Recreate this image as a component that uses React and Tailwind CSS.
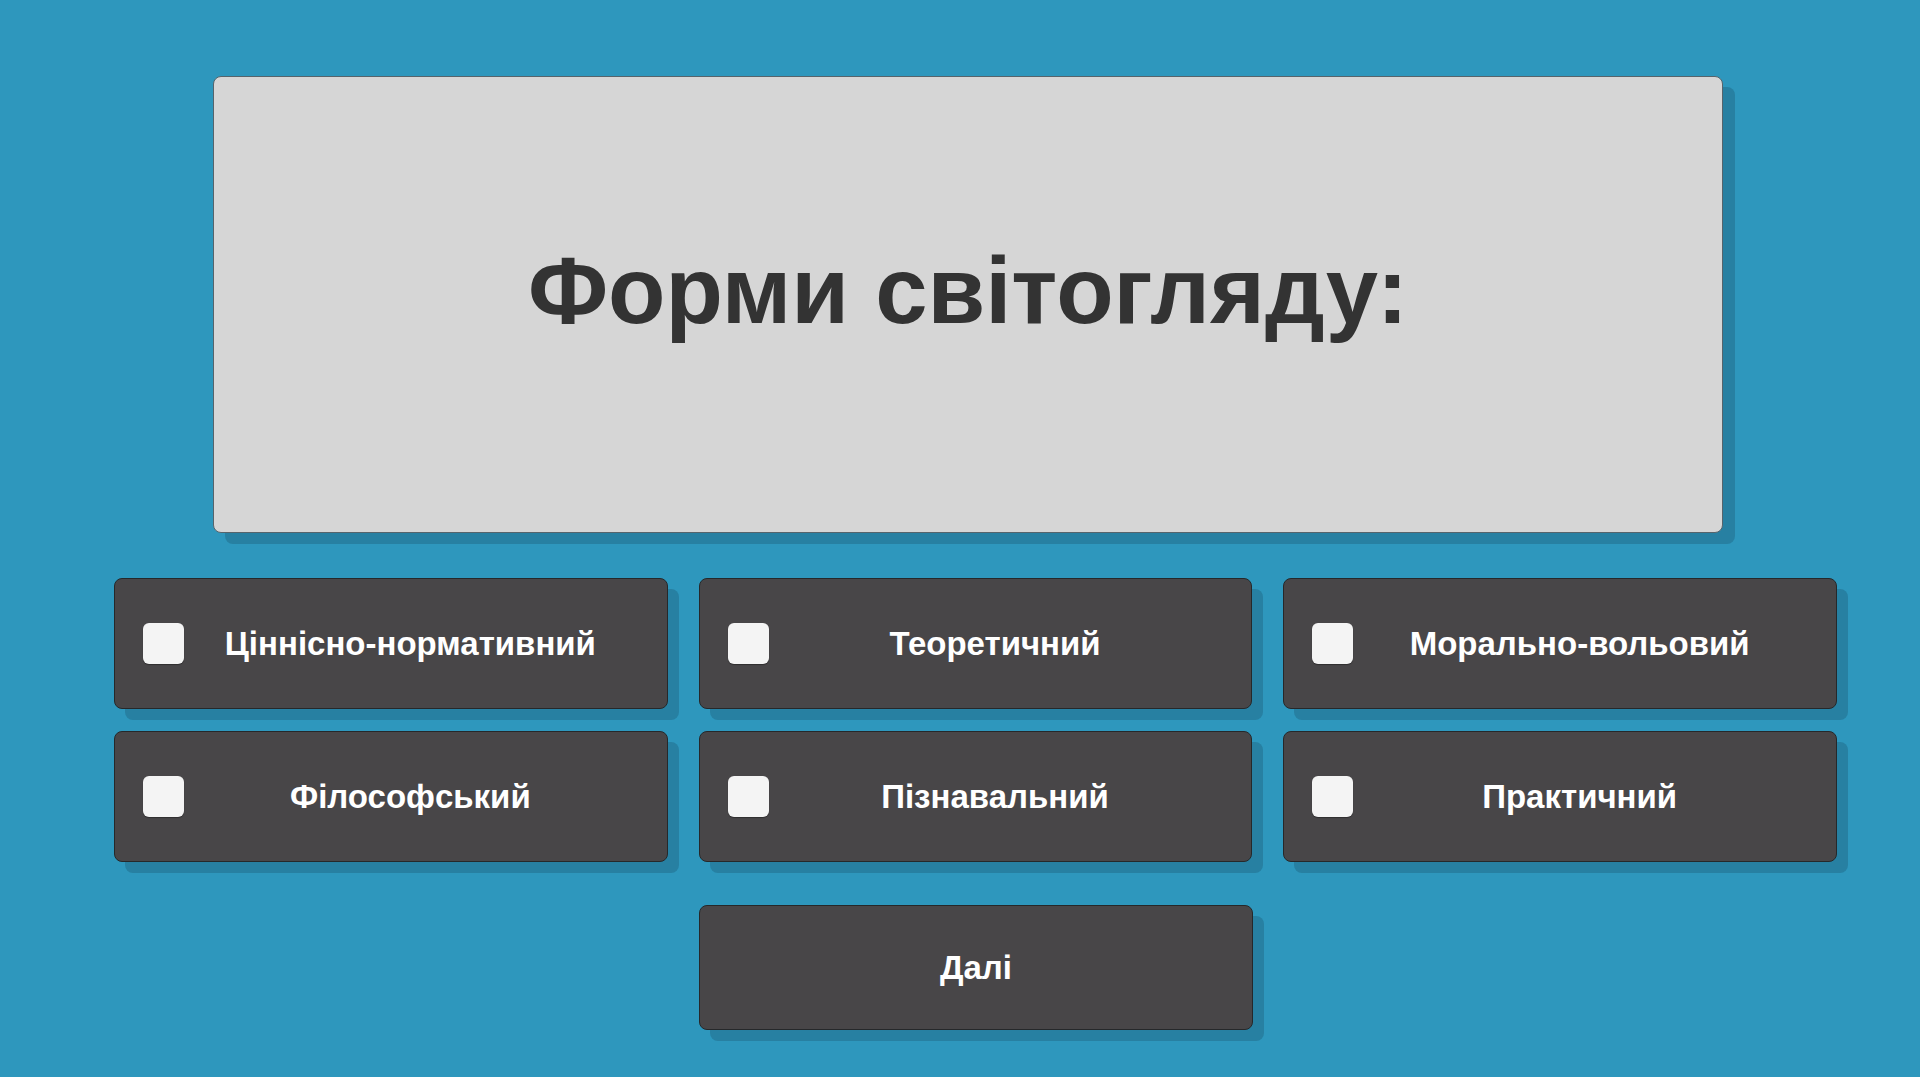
import React from "react";

const options = [
  "Ціннісно-нормативний",
  "Теоретичний",
  "Морально-вольовий",
  "Філософський",
  "Пізнавальний",
  "Практичний",
];

function Option({ label }) {
  return (
    <button className="flex h-[131px] items-center rounded-[8px] border border-[#26282a] bg-[#484648] pl-[28px] pr-[30px] shadow-[11px_11px_0_0_#2780a2]">
      <span className="h-[41px] w-[41px] shrink-0 rounded-[6px] bg-[#f4f4f4] shadow-[0_1px_1px_rgba(0,0,0,0.35)]" />
      <span className="flex-1 text-center text-[33px] font-bold leading-none text-white">
        {label}
      </span>
    </button>
  );
}

export default function App() {
  return (
    <div
      className="h-[1077px] w-full overflow-hidden bg-[#2e97bd] pt-[76px]"
      style={{ fontFamily: '"Liberation Sans", Arial, sans-serif' }}
    >
      <div className="ml-[213px] flex h-[457px] w-[1510px] items-center justify-center rounded-[8px] border border-[#56646c] bg-[#d6d6d6] pb-[27px] shadow-[12px_11px_0_0_#2780a2]">
        <h1 className="text-[94px] font-bold leading-none text-[#333333]">
          Форми світогляду:
        </h1>
      </div>

      <div className="ml-[114px] mt-[45px] grid w-[1723px] grid-cols-3 gap-x-[31px] gap-y-[22px]">
        {options.map((o) => (
          <Option key={o} label={o} />
        ))}
      </div>

      <button className="ml-[699px] mt-[43px] flex h-[125px] w-[554px] items-center justify-center rounded-[8px] border border-[#26282a] bg-[#484648] text-[33px] font-bold leading-none text-white shadow-[11px_11px_0_0_#2780a2]">
        Далі
      </button>
    </div>
  );
}
